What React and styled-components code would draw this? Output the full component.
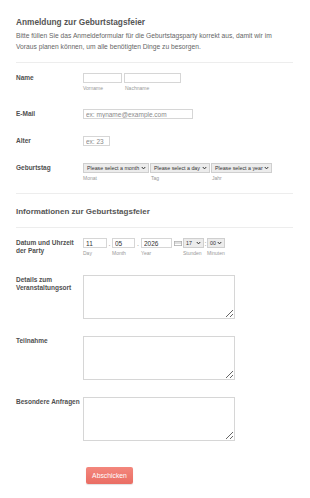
import React from 'react';
import styled, { createGlobalStyle } from 'styled-components';

const Global = createGlobalStyle`
  html, body { margin: 0; padding: 0; background: #fff; }
  body { font-family: "Liberation Sans", Arial, sans-serif; color: #555; }
  * { box-sizing: border-box; }
`;

const Page = styled.div`
  width: 310px;
  padding: 0 17px 20px 16px;
`;

const Header = styled.header`
  padding-top: 17px;
`;

const Title = styled.h1`
  margin: 0;
  font-size: ${p => p.$size || 8.3}px;
  line-height: 10px;
  font-weight: bold;
  color: #555;
  white-space: nowrap;
`;

const Desc = styled.p`
  margin: 2.5px 0 0;
  font-size: 6.7px;
  line-height: 11px;
  color: #666;
  white-space: nowrap;
`;

const Divider = styled.hr`
  border: 0;
  height: 1px;
  background: #ededed;
  margin: ${p => p.$top || 0}px 0 ${p => p.$bottom || 0}px;
`;

const SectionHead = styled.div`
  padding: 13px 0 10px;
`;

const Row = styled.div`
  display: flex;
  align-items: flex-start;
  padding: ${p => p.$top ?? 9}px 0 8px;
`;

const Label = styled.label`
  width: 67px;
  flex: none;
  padding-top: 1px;
  padding-right: 1px;
  font-size: 6.5px;
  line-height: 8px;
  font-weight: bold;
  color: #505050;
`;

const Fields = styled.div`
  display: flex;
  align-items: flex-start;
  gap: ${p => p.$gap ?? 0}px;
`;

const Field = styled.div`
  display: flex;
  flex-direction: column;
  width: ${p => p.$w}px;
`;

const Input = styled.input`
  width: ${p => p.$w}px;
  height: 10px;
  border: 1px solid #d6d6d6;
  border-radius: 0;
  padding: 0 2px;
  font-family: inherit;
  font-size: 6.5px;
  color: #333;
  background: #fff;
  outline: none;
  &::placeholder { color: #8a8a8a; }
`;

const Sub = styled.span`
  display: block;
  margin-top: 1px;
  font-size: 5px;
  line-height: 8px;
  color: #999;
  padding-left: ${p => p.$pl || 0}px;
  white-space: nowrap;
`;

const SelectBox = styled.div`
  width: ${p => p.$w}px;
  height: 10px;
  border: 1px solid #cfcfcf;
  background: #ececec;
  display: flex;
  align-items: center;
  justify-content: space-between;
  gap: 1px;
  padding: 0 2px 0 ${p => p.$pl ?? 3}px;
  font-size: 5.3px;
  color: #333;
  white-space: nowrap;
  overflow: hidden;
`;

const Sep = styled.span`
  width: ${p => p.$w}px;
  height: 10px;
  flex: none;
  display: flex;
  align-items: center;
  justify-content: center;
  font-size: 7px;
  color: #888;
`;

const TextArea = styled.textarea`
  width: 152px;
  height: 44px;
  border: 1px solid #d6d6d6;
  border-radius: 0;
  padding: 2px;
  margin: 0;
  display: block;
  background: #fff;
  outline: none;
  font-family: inherit;
  font-size: 6px;
`;

const ButtonRow = styled.div`
  padding: 15px 0 0 70px;
`;

const Button = styled.button`
  width: 47px;
  height: 17px;
  border: 0;
  border-radius: 2px;
  background: linear-gradient(#f3877d, #ea6d63);
  box-shadow: 0 1px 1px rgba(0,0,0,0.12);
  color: #fff;
  font-family: inherit;
  font-size: 6.8px;
  padding: 0;
  cursor: pointer;
`;

const Chevron = () => (
  <svg width="5" height="4" viewBox="0 0 10 8" style={{ flex: 'none' }}>
    <path d="M1.5 2 L5 5.8 L8.5 2" fill="none" stroke="#333" strokeWidth="2" />
  </svg>
);

const CalIcon = () => (
  <svg width="8" height="5" viewBox="0 0 16 10">
    <rect x="0.75" y="0.75" width="14.5" height="8.5" fill="none" stroke="#aaa" strokeWidth="1.5" />
    <line x1="0.75" y1="4" x2="15.25" y2="4" stroke="#aaa" strokeWidth="1.5" />
  </svg>
);

const Select = ({ w, text, pl }) => (
  <SelectBox $w={w} $pl={pl}>
    <span>{text}</span>
    <Chevron />
  </SelectBox>
);

export default function App() {
  return (
    <Page>
      <Global />
      <Header>
        <Title>Anmeldung zur Geburtstagsfeier</Title>
        <Desc>
          Bitte füllen Sie das Anmeldeformular für die Geburtstagsparty korrekt aus, damit wir im
          <br />
          Voraus planen können, um alle benötigten Dinge zu besorgen.
        </Desc>
      </Header>
      <Divider $top={10.5} $bottom={1} />

      <Row>
        <Label>Name</Label>
        <Fields $gap={2}>
          <Field $w={39}>
            <Input $w={39} />
            <Sub>Vorname</Sub>
          </Field>
          <Field $w={57}>
            <Input $w={57} />
            <Sub $pl={1}>Nachname</Sub>
          </Field>
        </Fields>
      </Row>

      <Row>
        <Label>E-Mail</Label>
        <Input $w={110} placeholder="ex: myname@example.com" />
      </Row>

      <Row>
        <Label>Alter</Label>
        <Input $w={27} placeholder="ex: 23" />
      </Row>

      <Row>
        <Label>Geburtstag</Label>
        <Fields $gap={1}>
          <Field $w={66}>
            <Select w={66} text="Please select a month" />
            <Sub>Monat</Sub>
          </Field>
          <Field $w={60}>
            <Select w={60} text="Please select a day" />
            <Sub $pl={1}>Tag</Sub>
          </Field>
          <Field $w={61}>
            <Select w={61} text="Please select a year" />
            <Sub $pl={1}>Jahr</Sub>
          </Field>
        </Fields>
      </Row>

      <Divider $top={3} />
      <SectionHead>
        <Title $size={8}>Informationen zur Geburtstagsfeier</Title>
      </SectionHead>
      <Divider $bottom={1} />

      <Row>
        <Label>Datum und Uhrzeit der Party</Label>
        <Fields>
          <Field $w={24}>
            <Input $w={24} defaultValue="11" />
            <Sub>Day</Sub>
          </Field>
          <Sep $w={5}>.</Sep>
          <Field $w={23}>
            <Input $w={23} defaultValue="05" />
            <Sub>Month</Sub>
          </Field>
          <Sep $w={6}>.</Sep>
          <Field $w={31}>
            <Input $w={31} defaultValue="2026" />
            <Sub>Year</Sub>
          </Field>
          <Sep $w={11}><CalIcon /></Sep>
          <Field $w={21}>
            <Select w={21} text="17" pl={2} />
            <Sub>Stunden</Sub>
          </Field>
          <Sep $w={3}>:</Sep>
          <Field $w={18}>
            <Select w={18} text="00" pl={2} />
            <Sub>Minuten</Sub>
          </Field>
        </Fields>
      </Row>

      <Row $top={10}>
        <Label>Details zum Veranstaltungsort</Label>
        <TextArea />
      </Row>

      <Row>
        <Label>Teilnahme</Label>
        <TextArea />
      </Row>

      <Row>
        <Label>Besondere Anfragen</Label>
        <TextArea />
      </Row>

      <ButtonRow>
        <Button type="button">Abschicken</Button>
      </ButtonRow>
    </Page>
  );
}
